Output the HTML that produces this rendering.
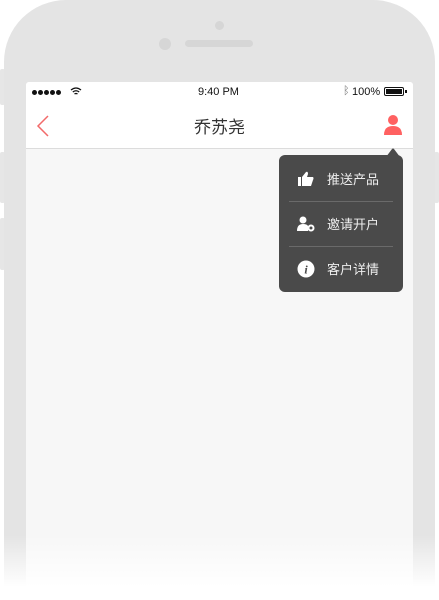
<!DOCTYPE html>
<html style="overflow:hidden;height:600px"><head><meta charset="utf-8"><style>
*{margin:0;padding:0;box-sizing:border-box}
body{width:439px;height:600px;background:#fff;position:relative;overflow:hidden;font-family:"Liberation Sans","Noto Sans CJK SC",sans-serif}
.phone{position:absolute;left:4px;top:0;width:431px;height:600px;background:#e4e4e4;border-radius:62px 62px 0 0}
.btn{position:absolute;width:5px;background:#e6e6e6;border-radius:2px}
.screen{position:absolute;left:26px;top:82px;width:387px;height:518px;background:#f7f7f7;border-radius:3px 3px 0 0;overflow:hidden}
.fade{position:absolute;left:0;top:535px;width:439px;height:65px;background:linear-gradient(rgba(255,255,255,0),#fff 80%)}
.status{position:absolute;left:0;top:0;width:387px;height:21px;background:#fff;font-size:11px;color:#111}
.nav{position:absolute;left:0;top:21px;width:387px;height:46px;background:#fff;border-bottom:1px solid #dcdcdc}
.title{position:absolute;width:100%;text-align:center;top:10px;font-size:17px;color:#333}
.menu{position:absolute;left:279px;top:155px;width:124px;height:137px;background:#4a4a4a;border-radius:6px;color:#eee;font-size:13px}
.item{position:absolute;left:0;width:124px;height:45px}
.item span{position:absolute;left:48px;top:13px}
.item svg{position:absolute;left:18px;top:15px}
.div{position:absolute;left:10px;width:104px;height:1px;background:#6a6a6a}
.dot{display:inline-block;width:5px;height:5px;border-radius:50%;background:#111;margin-right:1px}
</style></head><body>
<div class="btn" style="left:0;top:69px;height:36px"></div>
<div class="btn" style="left:0;top:152px;height:51px"></div>
<div class="btn" style="left:0;top:218px;height:52px"></div>
<div class="btn" style="left:434px;top:152px;height:51px"></div>
<div class="phone">
 <div style="position:absolute;left:211px;top:21px;width:9px;height:9px;border-radius:50%;background:#d6d6d6"></div>
 <div style="position:absolute;left:155px;top:38px;width:12px;height:12px;border-radius:50%;background:#d6d6d6"></div>
 <div style="position:absolute;left:181px;top:40px;width:68px;height:7px;border-radius:4px;background:#d6d6d6"></div>
</div>
<div class="screen">
 <div class="status">
  <div style="position:absolute;left:6px;top:8px;line-height:5px"><span class="dot"></span><span class="dot"></span><span class="dot"></span><span class="dot"></span><span class="dot"></span></div>
  <svg style="position:absolute;left:44px;top:5px" width="12" height="9" viewBox="0 0 12 9"><path d="M1 3Q6 -1 11 3M2.8 5Q6 2.5 9.2 5M4.5 7Q6 6 7.5 7" stroke="#111" stroke-width="1.3" fill="none"/></svg>
  <div style="position:absolute;left:172px;top:4px">9:40 PM</div>
  <div style="position:absolute;left:317px;top:3px;color:#777">ᛒ</div>
  <div style="position:absolute;left:326px;top:4px">100%</div>
  <div style="position:absolute;left:358px;top:5px;width:20px;height:9px;border:1px solid #111;border-radius:2px;padding:1px"><div style="width:100%;height:100%;background:#111"></div></div>
  <div style="position:absolute;left:379px;top:8px;width:2px;height:3px;background:#111"></div>
 </div>
 <div class="nav">
  <svg style="position:absolute;left:10px;top:12px" width="14" height="22" viewBox="0 0 14 22"><path d="M12 1L2 11L12 21" stroke="#f26a6a" stroke-width="1.5" fill="none"/></svg>
  <div class="title">乔苏尧</div>
  <svg style="position:absolute;left:357px;top:11px" width="20" height="22" viewBox="0 0 20 22"><circle cx="10" cy="6" r="5" fill="#ff6161"/><path d="M1 21Q1 12 10 12Q19 12 19 21Z" fill="#ff6161"/></svg>
 </div>
</div>
<div class="fade"></div>
<svg style="position:absolute;left:386px;top:148px" width="14" height="9" viewBox="0 0 14 9"><path d="M0 9L6 1Q7 0 8 1L14 9Z" fill="#4a4a4a"/></svg>
<div class="menu">
 <div class="item" style="top:1px"><svg width="18" height="16" viewBox="0 0 18 16"><rect x="1" y="6" width="3" height="9" fill="#fff"/><path d="M5 6L9 1Q11 0 11 3L10 6H16Q17 7 16 9L14 15H5Z" fill="#fff"/></svg><span>推送产品</span></div>
 <div class="div" style="top:46px"></div>
 <div class="item" style="top:46px"><svg width="18" height="16" viewBox="0 0 18 16"><circle cx="6" cy="4" r="3.5" fill="#fff"/><path d="M0 15Q0 8 6 8Q10 8 11 10V15Z" fill="#fff"/><circle cx="14" cy="12" r="3.5" fill="#fff"/><circle cx="14" cy="12" r="1.5" fill="#4a4a4a"/></svg><span>邀请开户</span></div>
 <div class="div" style="top:91px"></div>
 <div class="item" style="top:91px"><svg width="18" height="18" viewBox="0 0 18 18" style="top:14px"><circle cx="9" cy="9" r="8.5" fill="#fff"/><text x="9" y="13.5" text-anchor="middle" font-size="12" font-weight="bold" font-style="italic" font-family="Liberation Serif,serif" fill="#4a4a4a">i</text></svg><span>客户详情</span></div>
</div>
</body></html>
